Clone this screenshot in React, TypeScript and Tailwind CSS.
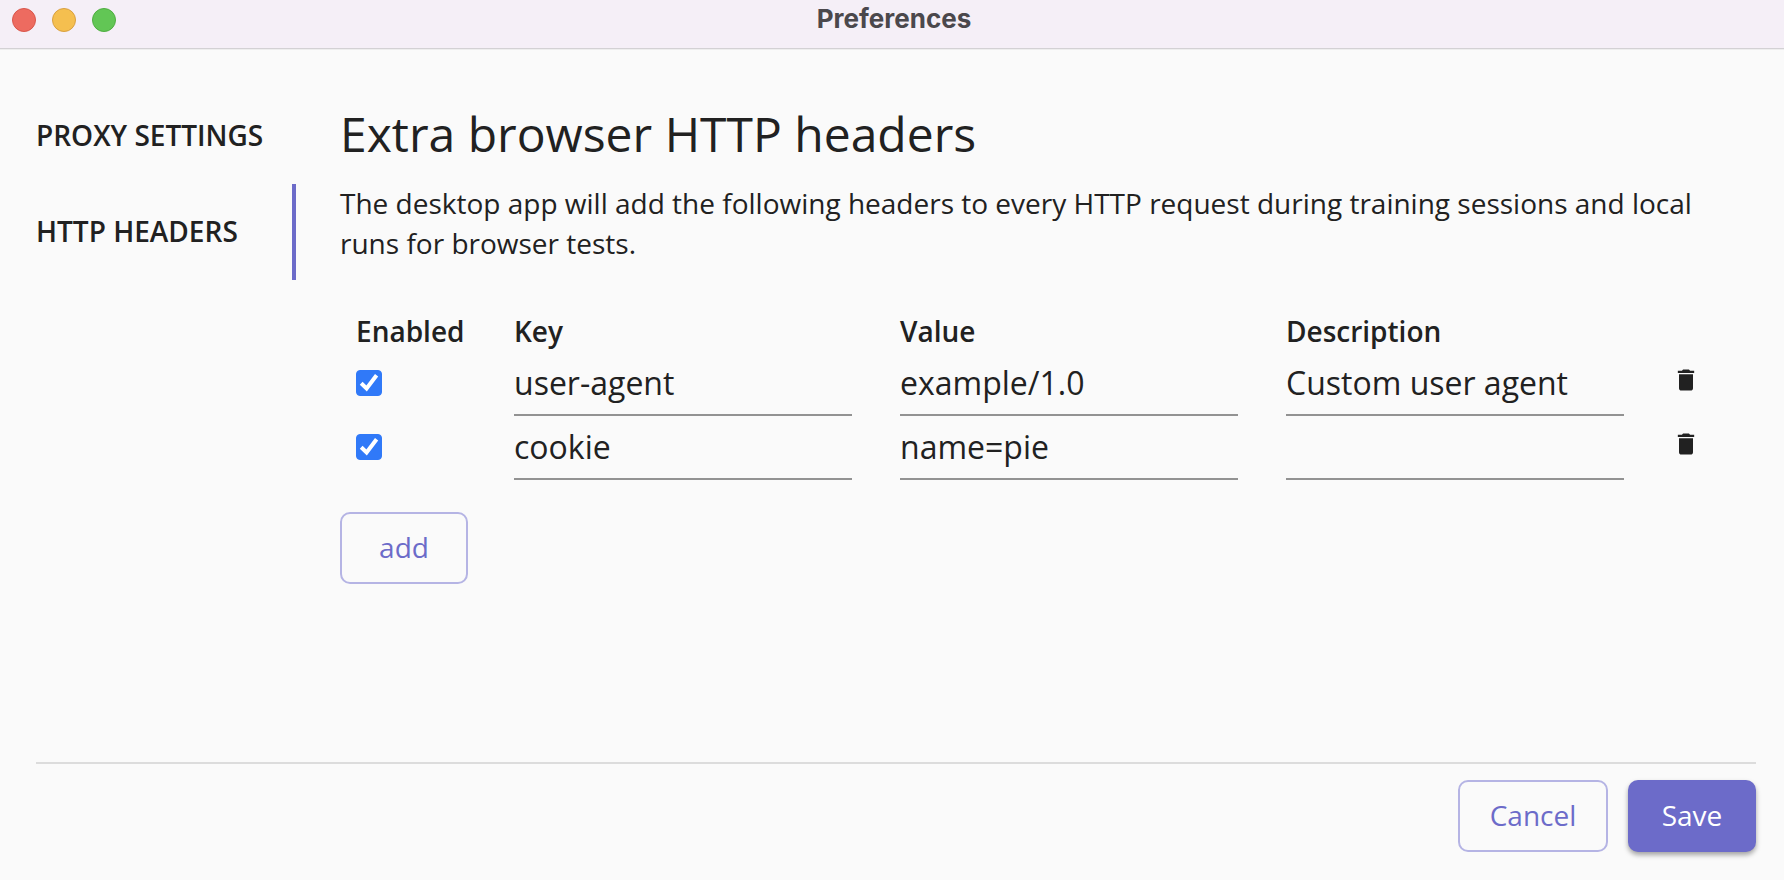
import { useState } from "react";
import { clsx } from "clsx";

interface Header {
  id: number;
  enabled: boolean;
  key: string;
  value: string;
  description: string;
}

type TextField = "key" | "value" | "description";

const initialHeaders: Header[] = [
  { id: 1, enabled: true, key: "user-agent", value: "example/1.0", description: "Custom user agent" },
  { id: 2, enabled: true, key: "cookie", value: "name=pie", description: "" }
];

const fields: { name: TextField; label: string }[] = [
  { name: "key", label: "Key" },
  { name: "value", label: "Value" },
  { name: "description", label: "Description" }
];

const tabs = ["Proxy settings", "HTTP headers"];

function TitleBar() {
  return (
    <header className="grid h-[49px] shrink-0 grid-cols-[1fr_auto_1fr] items-start border-b border-[#d3d1d4] bg-[#f5eff7] px-3 shadow-[0_1px_0_#eeeeee]">
      <div className="flex gap-4 pt-2">
        <button type="button" aria-label="Close" className="size-6 rounded-full border border-[#d9564b] bg-[#ed6b60]" />
        <button type="button" aria-label="Minimize" className="size-6 rounded-full border border-[#d9a040] bg-[#f5bf4f]" />
        <button type="button" aria-label="Zoom" className="size-6 rounded-full border border-[#4fae41] bg-[#62c655]" />
      </div>
      <h1 className="pt-px pl-1 font-['Inter',sans-serif] text-[26px] leading-9 font-bold text-[#4b484c]">
        Preferences
      </h1>
    </header>
  );
}

function Checkbox({ label, checked, onChange }: { label: string; checked: boolean; onChange: () => void }) {
  return (
    <span className="relative block size-[26px]">
      <input
        type="checkbox"
        aria-label={label}
        checked={checked}
        onChange={onChange}
        className="peer block size-full appearance-none rounded border border-gray-500 bg-white checked:border-[#3079f8] checked:bg-[#3079f8]"
      />
      <svg
        viewBox="0 0 26 26"
        className="pointer-events-none absolute inset-0 hidden size-full peer-checked:block"
        aria-hidden
      >
        <path d="M5.2 13.2 10.6 18.4 20.6 5.2" fill="none" stroke="white" strokeWidth="4" />
      </svg>
    </span>
  );
}

function TrashIcon() {
  return (
    <svg viewBox="0 0 24 24" className="size-7" fill="currentColor" aria-hidden>
      <path d="M6 19c0 1.1.9 2 2 2h8c1.1 0 2-.9 2-2V7H6v12zM19 4h-3.5l-1-1h-5l-1 1H5v2h14V4z" />
    </svg>
  );
}

export default function App() {
  const [activeTab, setActiveTab] = useState("HTTP headers");
  const [headers, setHeaders] = useState(initialHeaders);

  function updateHeader(id: number, patch: Partial<Header>) {
    setHeaders((rows) => rows.map((row) => (row.id === id ? { ...row, ...patch } : row)));
  }

  function addHeader() {
    setHeaders((rows) => [...rows, { id: Date.now(), enabled: true, key: "", value: "", description: "" }]);
  }

  return (
    <div className="flex min-h-screen flex-col bg-[#fafafa] font-['Open_Sans',sans-serif] text-[28px] leading-10 text-[#212121]">
      <TitleBar />

      <div className="flex grow pt-[39px] pr-7 pl-9">
        <nav className="flex w-[260px] shrink-0 flex-col">
          {tabs.map((tab) => (
            <button
              key={tab}
              type="button"
              onClick={() => setActiveTab(tab)}
              className={clsx(
                "h-24 border-r-4 pb-0.5 text-left font-semibold whitespace-nowrap uppercase",
                activeTab === tab ? "border-[#6c6bc9]" : "border-transparent"
              )}
            >
              {tab}
            </button>
          ))}
        </nav>

        <main className="min-w-0 grow pt-3 pl-11">
          <h2 className="text-5xl leading-[68px]">Extra browser HTTP headers</h2>
          <p className="mt-[15px] pr-6">
            The desktop app will add the following headers to every HTTP request during training sessions and local
            runs for browser tests.
          </p>

          <table className="mt-12 w-full table-fixed">
            <thead>
              <tr className="text-left">
                <th className="w-[158px] p-0 pb-px pl-4 font-semibold">Enabled</th>
                {fields.map((field) => (
                  <th key={field.name} className="p-0 pb-px pl-4 font-semibold">
                    {field.label}
                  </th>
                ))}
                <th className="w-[100px] p-0" aria-label="Actions" />
              </tr>
            </thead>
            <tbody>
              {headers.map((header) => (
                <tr key={header.id}>
                  <td className="p-0 pb-0.5 pl-4">
                    <Checkbox
                      label="Enabled"
                      checked={header.enabled}
                      onChange={() => updateHeader(header.id, { enabled: !header.enabled })}
                    />
                  </td>
                  {fields.map((field) => (
                    <td key={field.name} className="p-0 pr-8 pl-4">
                      <input
                        type="text"
                        aria-label={field.label}
                        value={header[field.name]}
                        onChange={(event) => updateHeader(header.id, { [field.name]: event.target.value })}
                        className="block h-16 w-full border-b-2 border-[#929292] pb-0.5 text-[32px] outline-none"
                      />
                    </td>
                  ))}
                  <td className="p-0 pb-2 pl-4">
                    <button
                      type="button"
                      aria-label="Delete header"
                      onClick={() => setHeaders((rows) => rows.filter((row) => row.id !== header.id))}
                      className="block"
                    >
                      <TrashIcon />
                    </button>
                  </td>
                </tr>
              ))}
            </tbody>
          </table>

          <button
            type="button"
            onClick={addHeader}
            className="mt-8 h-[72px] w-32 rounded-[10px] border-2 border-[#b5b4e4] pb-0.5 text-[#6c6bc9]"
          >
            add
          </button>
        </main>
      </div>

      <footer className="mr-7 mb-7 ml-9 flex justify-end gap-5 border-t-2 border-[#dcdcdc] pt-4">
        <button
          type="button"
          className="h-[72px] w-[150px] rounded-[10px] border-2 border-[#b5b4e4] pb-0.5 text-[#6c6bc9]"
        >
          Cancel
        </button>
        <button
          type="button"
          className="h-[72px] w-32 rounded-[10px] bg-[#6c6bc9] pb-0.5 text-white shadow-[0_3px_5px_rgba(0,0,0,0.35)]"
        >
          Save
        </button>
      </footer>
    </div>
  );
}
